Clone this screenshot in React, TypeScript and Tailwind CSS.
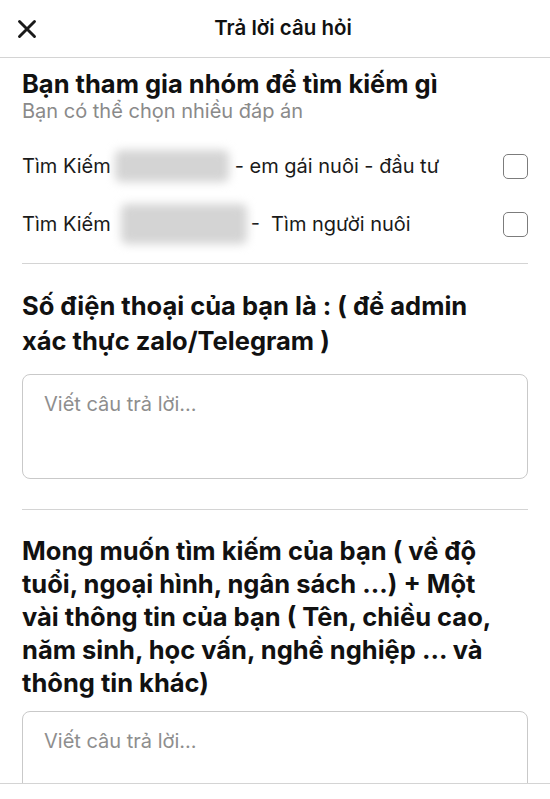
import React from "react";

function CloseIcon() {
  return (
    <svg width="20" height="20" viewBox="0 0 20 20" fill="none">
      <path d="M2.5 2.5 L17.5 17.5 M17.5 2.5 L2.5 17.5" stroke="#1a1a1a" strokeWidth="2.9" strokeLinecap="round" />
    </svg>
  );
}

function Checkbox() {
  return <div className="w-[25px] h-[25px] shrink-0 rounded-[5px] border-[1.5px] border-[#7c7c7c] bg-white" />;
}

function Blur({ w, h }: { w: string; h: string }) {
  return (
    <span className={`inline-block ${w} ${h} relative`}>
      <span className="absolute inset-[4px] rounded-[6px] bg-[#d4d4d4] blur-[5px]" />
    </span>
  );
}

function Answer() {
  return (
    <div className="h-[105px] rounded-[8px] border border-[#c9c9c9] pl-[21px] pt-[16px] text-[20px] leading-[26px] text-[#8e8e8e]">
      Viết câu trả lời...
    </div>
  );
}

export default function App() {
  return (
    <div
      className="h-[799px] w-[550px] flex flex-col bg-white overflow-hidden text-[#111]"
      style={{ fontFamily: 'Inter, "Noto Sans", "Liberation Sans", sans-serif' }}
    >
      <header className="h-[58px] shrink-0 relative flex items-center justify-center border-b border-[#d4d4d4]">
        <div className="absolute left-[17px] top-[19px]">
          <CloseIcon />
        </div>
        <h1 className="text-[20.5px] font-semibold pl-[16px]">Trả lời câu hỏi</h1>
      </header>

      <main className="flex-1 overflow-hidden px-[22px]">
        <h2 className="mt-[12px] text-[25.5px] font-bold leading-[28px]">Bạn tham gia nhóm để tìm kiếm gì</h2>
        <p className="text-[20px] leading-[26px] text-[#8a8a8a]">Bạn có thể chọn nhiều đáp án</p>

        <div className="mt-[13px] flex flex-col">
          <div className="h-[58px] flex items-center justify-between">
            <div className="flex items-center text-[20px] text-[#1a1a1a]">
              <span>Tìm Kiếm</span>
              <Blur w="w-[122px]" h="h-[40px]" />
              <span className="ml-[2px]">- em gái nuôi - đầu tư</span>
            </div>
            <Checkbox />
          </div>
          <div className="h-[58px] flex items-center justify-between">
            <div className="flex items-center text-[20px] text-[#1a1a1a]">
              <span>Tìm Kiếm</span>
              <span className="w-[6px]" />
              <Blur w="w-[134px]" h="h-[48px]" />
              <span className="whitespace-pre">-  Tìm người nuôi</span>
            </div>
            <Checkbox />
          </div>
        </div>

        <div className="mt-[10px] border-t border-[#d4d4d4]" />

        <h2 className="mt-[24px] text-[25.5px] font-bold leading-[35px] pr-[18px]">
          Số điện thoại của bạn là : ( để admin xác thực zalo/Telegram )
        </h2>
        <div className="mt-[16px]">
          <Answer />
        </div>

        <div className="mt-[30px] border-t border-[#d4d4d4]" />

        <h2 className="mt-[24px] text-[25.5px] font-bold leading-[33px] pr-[18px]">
          Mong muốn tìm kiếm của bạn ( về độ tuổi, ngoại hình, ngân sách ...) + Một vài thông tin của bạn ( Tên, chiều cao, năm sinh, học vấn, nghề nghiệp ... và thông tin khác)
        </h2>
        <div className="mt-[12px]">
          <Answer />
        </div>
      </main>

      <footer className="h-[16px] shrink-0 border-t border-[#d4d4d4] bg-white" />
    </div>
  );
}
